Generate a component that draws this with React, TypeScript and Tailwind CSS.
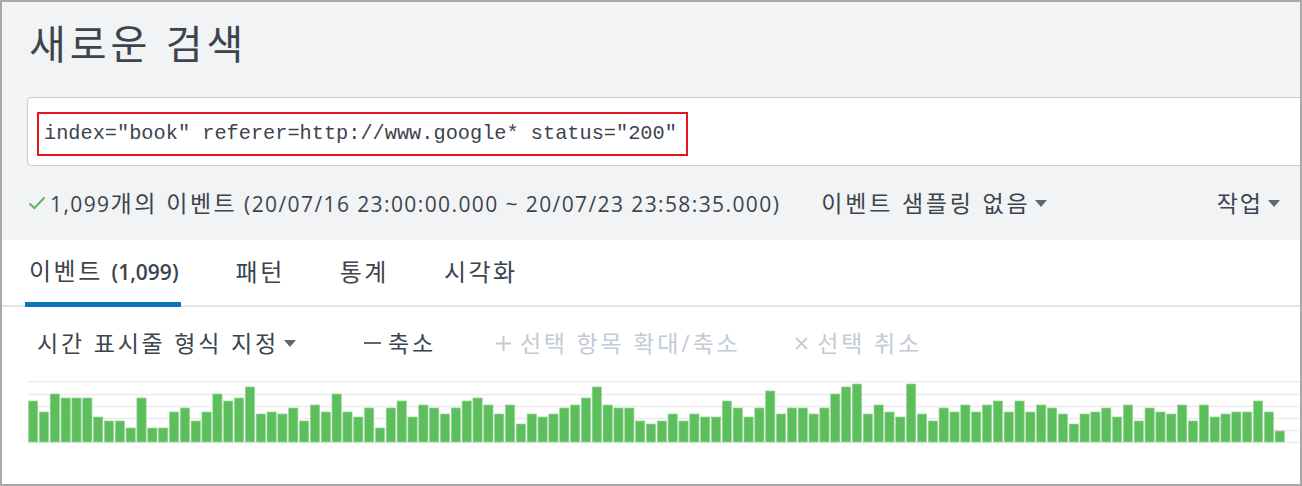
import React from 'react';

const bars = [
  41, 30, 48, 44, 44, 44, 25, 21, 21, 14, 44, 14, 14, 30, 34, 21, 30, 48, 41, 44, 55, 28, 30, 28, 34, 21, 37, 30,
  48, 30, 25, 34, 14, 34, 41, 25, 37, 34, 28, 34, 41, 44, 37, 28, 37, 18, 28, 25, 28, 34, 37, 44, 55, 37, 34, 34, 21,
  18, 21, 28, 21, 28, 25, 25, 41, 34, 25, 34, 51, 28, 34, 34, 28, 34, 48, 55, 58, 28, 37, 30, 25, 58, 28, 21, 34, 30, 37,
  30, 37, 41, 30, 41, 30, 37, 34, 28, 18, 28, 30, 34, 25, 37, 21, 34, 30, 28, 37, 21, 37, 25, 28, 30, 30, 41, 30, 11,
];

const Caret = () => (
  <svg width="12" height="7" viewBox="0 0 12 7" className="ml-[5px] inline-block shrink-0">
    <path d="M0 0 L12 0 L6 7 Z" fill="#5c6773" />
  </svg>
);

const Timeline = () => {
  const pitch = 10.84;
  const base = 61;
  return (
    <svg width="1272" height="64" viewBox="0 0 1272 64">
      {[0, 13, 25, 37, 49, 61].map((y) => (
        <line key={y} x1="0" x2="1272" y1={y + 0.5} y2={y + 0.5} stroke="#ebebeb" strokeWidth="1.5" />
      ))}
      {bars.map((h, i) => (
        <rect
          key={i}
          x={i * pitch + 0.5}
          y={base - h}
          width={pitch - 1.6}
          height={h}
          fill="#5cbf5c"
          stroke="#9ad59a"
          strokeWidth="0.7"
        />
      ))}
    </svg>
  );
};

const App = () => {
  const ui = { fontFamily: '"Open Sans", "Noto Sans CJK KR", sans-serif' };
  return (
    <div className="w-[1302px] h-[486px] border-2 border-[#a9a9a9] bg-white overflow-hidden" style={ui}>
      {/* top panel */}
      <div className="bg-[#f2f3f5] h-[238px] pt-[18px]">
        <h1 className="ml-[27px] text-[40px] leading-[48px] text-[#3c444d] font-normal tracking-[4px]">
          새로운 검색
        </h1>
        <div className="mt-[29px] ml-[25px] w-[1290px] h-[69px] bg-white border border-[#c3cbd4] rounded-[4px] pl-[9px] pt-[14px]">
          <div
            className="inline-flex items-center h-[44px] border-2 border-[#e4151f] pl-[5px] pr-[9px] text-[20.3px] text-[#3c444d]"
            style={{ fontFamily: '"Liberation Mono", monospace' }}
          >
            index="book" referer=http://www.google* status="200"
          </div>
        </div>
        <div className="flex items-center mt-[20px] pl-[26px] pr-[20px] text-[21px] tracking-[1.4px] text-[#3c444d]">
          <svg width="18" height="14" viewBox="0 0 18 14" className="mr-[4px] shrink-0">
            <path d="M1.5 7.5 L6.5 12 L16.5 1.5" fill="none" stroke="#5cb85c" strokeWidth="2" />
          </svg>
          <span className="whitespace-nowrap">
            1,099<span className="text-[23px] tracking-[2.5px]">개의 이벤트</span> (20/07/16 23:00:00.000 ~ 20/07/23
            23:58:35.000)
          </span>
          <span className="ml-[41px] flex items-center text-[23px] tracking-[2.8px] whitespace-nowrap">
            이벤트 샘플링 없음
            <Caret />
          </span>
          <span className="ml-auto flex items-center text-[23px] tracking-[2px]">
            작업
            <Caret />
          </span>
        </div>
      </div>

      {/* tabs */}
      <div className="flex items-end h-[67px] border-b-2 border-[#e1e6eb] pl-[23px] text-[24px] tracking-[2.5px] text-[#3c444d] whitespace-nowrap">
        <div className="pl-[4px] pr-[2px] pb-[13px] border-b-[5px] border-[#0877c0] -mb-[2px]">
          이벤트 <span className="text-[21px] font-semibold tracking-normal">(1,099)</span>
        </div>
        <div className="ml-[55px] pb-[15px]">패턴</div>
        <div className="ml-[55px] pb-[15px]">통계</div>
        <div className="ml-[55px] pb-[15px]">시각화</div>
      </div>

      {/* toolbar */}
      <div className="flex items-center h-[72px] pl-[35px] text-[23px] tracking-[2.8px] whitespace-nowrap">
        <span className="flex items-center text-[#3c444d]">
          시간 표시줄 형식 지정
          <Caret />
        </span>
        <span className="ml-[68px] flex items-center text-[#3c444d]">
          <span className="inline-block w-[17px] h-[2px] bg-[#5c6773] mr-[7px]" />
          축소
        </span>
        <span className="ml-[60px] flex items-center text-[#c3cbd4]">
          <svg width="15" height="15" viewBox="0 0 15 15" className="mr-[9px]">
            <path d="M7.5 0 V15 M0 7.5 H15" stroke="#c3cbd4" strokeWidth="2" />
          </svg>
          선택 항목 확대/축소
        </span>
        <span className="ml-[55px] flex items-center text-[#c3cbd4]">
          <svg width="13" height="13" viewBox="0 0 13 13" className="mr-[9px]">
            <path d="M1 1 L12 12 M12 1 L1 12" stroke="#c3cbd4" strokeWidth="2" />
          </svg>
          선택 취소
        </span>
      </div>

      {/* timeline */}
      <div className="pl-[26px] pt-[2px]">
        <Timeline />
      </div>
    </div>
  );
};

export default App;
